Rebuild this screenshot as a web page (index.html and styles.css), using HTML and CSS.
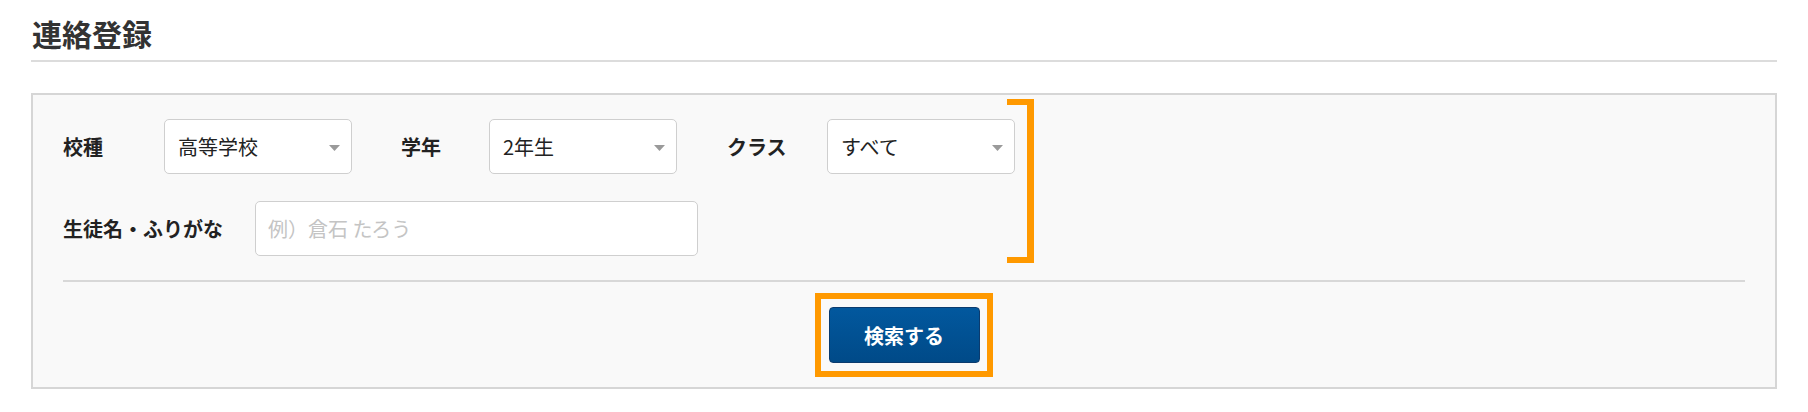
FILE: index.html
```html
<!DOCTYPE html>
<html lang="ja">
<head>
<meta charset="utf-8">
<title>連絡登録</title>
<link rel="stylesheet" href="styles.css">
</head>
<body>
<div class="page">
  <h1 class="title">連絡登録</h1>
  <section class="panel">
    <div class="row">
      <div class="field">
        <span class="label label-school">校種</span>
        <div class="select"><span>高等学校</span><svg class="caret" width="11" height="6" viewBox="0 0 11 6"><path d="M0 0H11L5.5 6Z" fill="#9a9a9a"/></svg></div>
      </div>
      <div class="field">
        <span class="label label-grade">学年</span>
        <div class="select"><span>2年生</span><svg class="caret" width="11" height="6" viewBox="0 0 11 6"><path d="M0 0H11L5.5 6Z" fill="#9a9a9a"/></svg></div>
      </div>
      <div class="field">
        <span class="label label-class">クラス</span>
        <div class="select"><span>すべて</span><svg class="caret" width="11" height="6" viewBox="0 0 11 6"><path d="M0 0H11L5.5 6Z" fill="#9a9a9a"/></svg></div>
      </div>
    </div>
    <div class="row row-name">
      <div class="field">
        <span class="label label-name">生徒名・ふりがな</span>
        <div class="input"><span class="placeholder">例）倉石 たろう</span></div>
      </div>
    </div>
    <div class="bracket"></div>
    <hr class="divider">
    <div class="actions">
      <div class="btn-wrap">
        <button class="btn" type="button">検索する</button>
        <div class="frame"></div>
      </div>
    </div>
  </section>
</div>
</body>
</html>
```

FILE: styles.css
```css
* { box-sizing: border-box; }
html, body { margin: 0; padding: 0; background: #fff; }
body {
  font-family: "Noto Sans CJK JP", "Noto Sans", sans-serif;
  color: #333;
}
.page {
  padding: 0 31px;
}
.title {
  margin: 0;
  padding: 18px 0 12px 1px;
  font-size: 30px;
  line-height: 30px;
  font-weight: 700;
  color: #333;
  border-bottom: 2px solid #dcdcdc;
}
.panel {
  position: relative;
  margin-top: 31px;
  height: 296px;
  background: #f9f9f9;
  border: 2px solid #d6d6d6;
  padding: 24px 30px 0 30px;
}
.row {
  display: flex;
  align-items: center;
  height: 55px;
}
.row-name { margin-top: 27px; }
.field {
  display: flex;
  align-items: center;
}
.label {
  font-size: 20px;
  font-weight: 700;
  color: #222;
  line-height: 24px;
}
.label-school { width: 101px; }
.label-grade { width: 88px; margin-left: 49px; }
.label-class { width: 100px; margin-left: 50px; }
.label-name { width: 192px; }
.select {
  width: 188px;
  height: 55px;
  background: #fff;
  border: 1.5px solid #cfcfcf;
  border-radius: 5px;
  display: flex;
  align-items: center;
  justify-content: space-between;
  padding: 0 11px 0 13px;
  font-size: 20px;
  color: #222;
}
.caret { display: block; margin-top: 2px; }
.input {
  width: 443px;
  height: 55px;
  background: #fff;
  border: 1.5px solid #cfcfcf;
  border-radius: 5px;
  display: flex;
  align-items: center;
  padding: 0 12px;
  font-size: 20px;
}
.placeholder { color: #c4c4c4; }
.bracket {
  position: absolute;
  left: 974px;
  top: 4px;
  width: 27px;
  height: 164px;
  border-top: 6px solid #ff9900;
  border-bottom: 6px solid #ff9900;
  border-right: 7px solid #ff9900;
}
.divider {
  margin: 24px 0 0 0;
  border: 0;
  height: 2px;
  background: #d8d8d8;
}
.actions {
  display: flex;
  justify-content: center;
  margin-top: 25px;
}
.btn-wrap { position: relative; }
.btn {
  display: block;
  width: 151px;
  height: 56px;
  border: 1px solid #0b3b6e;
  border-radius: 4px;
  background: linear-gradient(#02589e, #004a88);
  color: #fff;
  font-family: "Noto Sans CJK JP", "Noto Sans", sans-serif;
  font-size: 20px;
  font-weight: 700;
  padding: 0;
}
.frame {
  position: absolute;
  left: -14px;
  top: -14px;
  right: -13px;
  bottom: -14px;
  border: 6px solid #ff9900;
  pointer-events: none;
}
```
